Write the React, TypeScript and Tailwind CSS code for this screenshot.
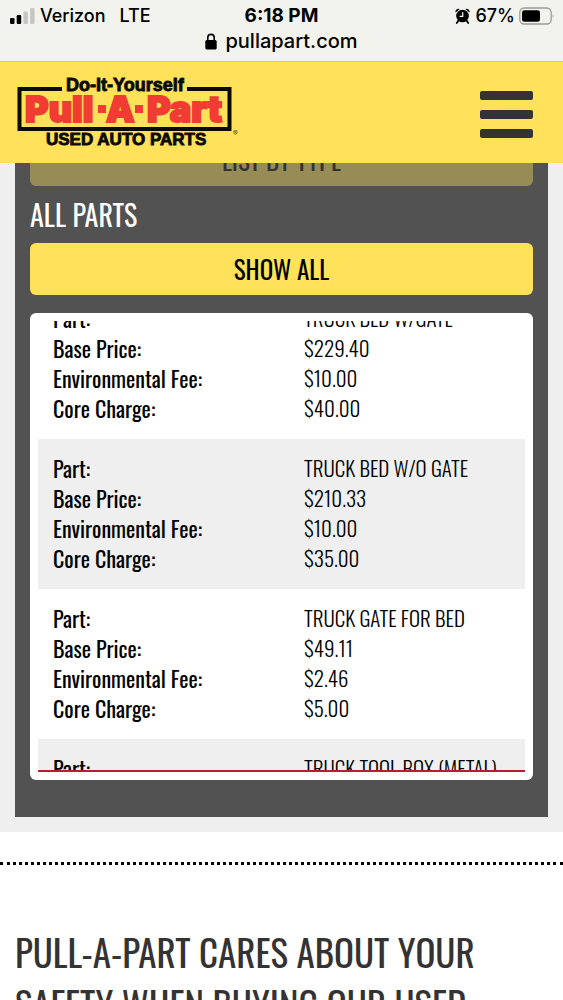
import { useEffect, useRef } from "react";

const parts = [
  { name: "TRUCK BED W/GATE", price: "$229.40", fee: "$10.00", core: "$40.00" },
  { name: "TRUCK BED W/O GATE", price: "$210.33", fee: "$10.00", core: "$35.00" },
  { name: "TRUCK GATE FOR BED", price: "$49.11", fee: "$2.46", core: "$5.00" },
  { name: "TRUCK TOOL BOX (METAL)", price: "$65.00", fee: "$3.25", core: "$10.00" },
];

function StatusBar() {
  return (
    <div className="shrink-0 bg-[#f2f3ec] border-b border-[#cdc790] pt-1 pb-2 font-['Inter',sans-serif] text-black">
      <div className="grid grid-cols-3 items-center h-6 text-lg leading-6 font-medium">
        <div className="flex items-center pl-2.5">
          <svg width="26" height="16" viewBox="0 0 26 16" aria-hidden="true">
            <rect x="0" y="10" width="4.5" height="6" rx="1.2" />
            <rect x="6.7" y="7" width="4.5" height="9" rx="1.2" />
            <rect x="13.4" y="3.5" width="4.5" height="12.5" rx="1.2" fill="#c6c7c1" />
            <rect x="20.1" y="0" width="4.5" height="16" rx="1.2" fill="#c6c7c1" />
          </svg>
          <span className="ml-1">Verizon</span>
          <span className="ml-3.5">LTE</span>
        </div>
        <div className="text-center text-[19px] font-bold whitespace-nowrap">6:18 PM</div>
        <div className="flex items-center justify-end pr-2">
          <svg width="15" height="16" viewBox="0 0 15 16" aria-hidden="true">
            <circle cx="7.5" cy="8" r="6.3" />
            <path d="M0.6 4.6 A3 3 0 0 1 4.8 1 Z M14.4 4.6 A3 3 0 0 0 10.2 1 Z" />
            <path d="M3.4 12.5 L1.8 15 M11.6 12.5 L13.2 15" stroke="#000" strokeWidth="1.8" strokeLinecap="round" />
            <path d="M7.7 4.2 V8.4 H4.6" fill="none" stroke="#f2f3ec" strokeWidth="1.3" />
          </svg>
          <span className="ml-1.5">67%</span>
          <svg className="ml-1" width="36" height="18" viewBox="0 0 36 18" aria-hidden="true">
            <rect x="0.8" y="1" width="31.4" height="16" rx="4.5" fill="none" stroke="#9b9c96" strokeWidth="1.3" />
            <rect x="3" y="3.2" width="18" height="11.6" rx="2.4" />
            <path d="M33.8 6.4 Q35.6 9 33.8 11.6 Z" fill="#9b9c96" />
          </svg>
        </div>
      </div>
      <div className="flex items-center justify-center h-6 mt-px">
        <svg width="12" height="17" viewBox="0 0 12 17" aria-hidden="true">
          <rect x="0.3" y="7" width="11.4" height="9.5" rx="1.6" />
          <path d="M2.8 8 V4.6 A3.2 3.2 0 0 1 9.2 4.6 V8" fill="none" stroke="#000" strokeWidth="1.6" />
        </svg>
        <span className="ml-2 text-xl leading-6 font-medium">pullapart.com</span>
      </div>
    </div>
  );
}

function Logo() {
  return (
    <svg width="224" height="71" viewBox="0 0 224 71" role="img" aria-label="Do-It-Yourself Pull-A-Part Used Auto Parts">
      <path d="M46 12 H3.5 V52 H213.5 V12 H171" fill="none" stroke="#0b0b05" strokeWidth="4" />
      <g fontFamily="'Liberation Sans', sans-serif" fontWeight="700" fill="#0b0b05" stroke="#0b0b05" strokeWidth="0.9">
        <text x="50" y="14" fontSize="18">Do-It-Yourself</text>
        <text x="30" y="68" fontSize="17">USED AUTO PARTS</text>
      </g>
      <g fontFamily="Inter, sans-serif" fontWeight="900" fontSize="36" fill="#f13c33" stroke="#f13c33" strokeWidth="2">
        <text x="9" y="45">Pull</text>
        <text x="90" y="45">A</text>
        <text x="131" y="45">Part</text>
      </g>
      <rect x="82" y="28" width="8" height="8" fill="#f13c33" />
      <rect x="119" y="28" width="8" height="8" fill="#f13c33" />
      <text x="217" y="59" fontSize="7" fontFamily="Inter, sans-serif" fill="#4a4520">®</text>
    </svg>
  );
}

function Header() {
  return (
    <header className="relative z-10 shrink-0 flex items-center justify-between bg-[#ffe25a] pl-4 pr-[30px] py-[15px]">
      <a href="#home"><Logo /></a>
      <button type="button" aria-label="Menu" className="flex flex-col gap-2.5 pt-1">
        <span className="block w-[53px] h-[9px] rounded-xs bg-[#333]"></span>
        <span className="block w-[53px] h-[9px] rounded-xs bg-[#333]"></span>
        <span className="block w-[53px] h-[9px] rounded-xs bg-[#333]"></span>
      </button>
    </header>
  );
}

function PartList() {
  const listRef = useRef<HTMLDivElement>(null);

  useEffect(() => {
    if (listRef.current) listRef.current.scrollTop = 32;
  }, []);

  return (
    <div className="mt-[18px] rounded-md bg-white p-2">
      <div ref={listRef} className="h-[451px] overflow-y-auto border-b-2 border-[#b0202e] [scrollbar-width:none]">
        {parts.map((p) => (
          <dl key={p.name} className="grid grid-cols-[251px_1fr] px-[15px] pt-3.5 pb-4 text-[22px] leading-[30px] text-black even:bg-[#efefef]">
            <dt>Part:</dt>
            <dd className="text-[21px] font-light whitespace-nowrap">{p.name}</dd>
            <dt>Base Price:</dt>
            <dd className="text-[21px] font-light">{p.price}</dd>
            <dt>Environmental Fee:</dt>
            <dd className="text-[21px] font-light">{p.fee}</dd>
            <dt>Core Charge:</dt>
            <dd className="text-[21px] font-light">{p.core}</dd>
          </dl>
        ))}
      </div>
    </div>
  );
}

export default function App() {
  return (
    <div className="flex flex-col h-screen overflow-hidden bg-white font-['Oswald','Open_Sans_Condensed',sans-serif]">
      <StatusBar />
      <Header />
      <main className="flex-1 min-h-0 overflow-hidden">
        <section className="bg-[#efefef] px-[15px] pb-[15px]">
          <div className="bg-[#525252] px-[15px] pb-[37px]">
            <button type="button" disabled className="-mt-[29px] block w-full h-[52px] rounded-md bg-[#978c56] text-[25px] leading-[52px] text-[#333]">LIST BY TYPE</button>
            <h3 className="pt-2 pb-2 text-[28px] leading-[41px] text-white">ALL PARTS</h3>
            <button type="button" className="block w-full h-[52px] rounded-md bg-[#ffe25a] text-[25px] leading-[52px] text-black">SHOW ALL</button>
            <PartList />
          </div>
        </section>
        <hr className="mt-[30px] border-0 border-t-3 border-dotted border-black" />
        <h2 className="mt-[61px] px-[15px] text-[37px] leading-[52px] text-[#333]">PULL-A-PART CARES ABOUT YOUR SAFETY WHEN BUYING OUR USED AUTO PARTS</h2>
      </main>
    </div>
  );
}
